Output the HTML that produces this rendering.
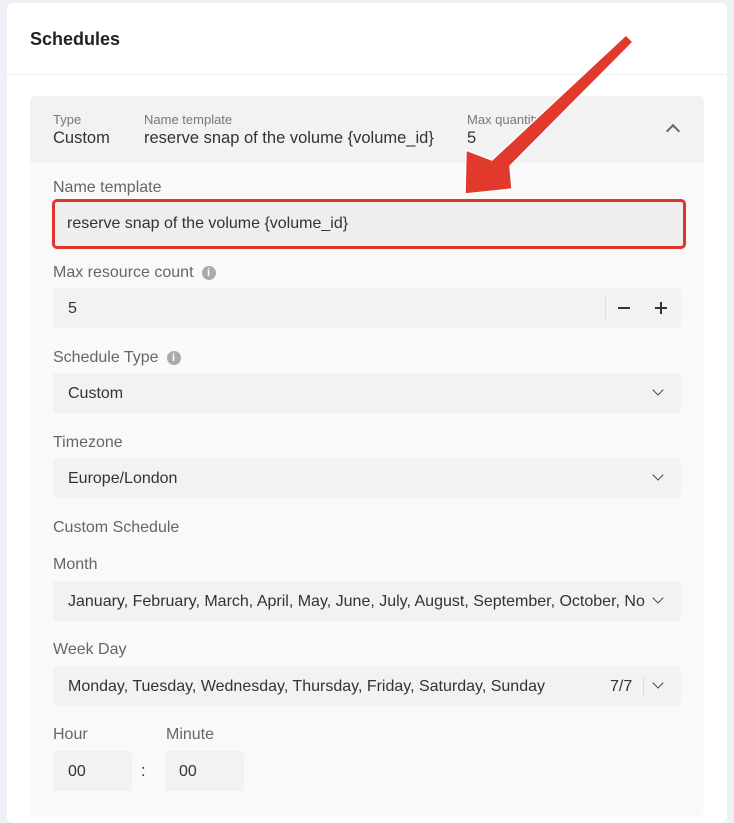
<!DOCTYPE html>
<html><head><style>
body{margin:0;width:734px;height:806px;background:#eef0f5;font-family:"Liberation Sans",sans-serif;position:relative;overflow:hidden;color:#333}
.card{position:absolute;left:7px;top:3px;width:720px;height:820px;background:#fff;border-radius:6px}
.title{position:absolute;left:30px;top:29px;font-size:18px;font-weight:bold;color:#222}
.hr{position:absolute;left:7px;top:74px;width:720px;height:1px;background:#eee}
.panel{position:absolute;left:30px;top:96px;width:674px;height:720px;background:#f9f9f9;border-radius:6px}
.phead{position:absolute;left:30px;top:96px;width:674px;height:67px;background:#f2f2f2;border-radius:6px 6px 0 0}
.t{position:absolute;white-space:nowrap}
.sm{font-size:13px;color:#777}
.md{font-size:16.5px;color:#333}
.lab{font-size:16px;color:#666}
.inp{position:absolute;left:53px;width:628px;height:40px;background:#f2f2f2;border-radius:3px}
.inp span{position:absolute;left:15px;top:12px;font-size:16px;color:#333;white-space:nowrap}
.chev{position:absolute;right:19px;top:13px;width:7px;height:7px;border-right:1.5px solid #444;border-bottom:1.5px solid #444;transform:rotate(45deg)}
.info{display:inline-block;width:14px;height:14px;border-radius:50%;background:#aaa;color:#fff;font-size:11px;font-weight:bold;text-align:center;line-height:14px;margin-left:8px;vertical-align:1px}
</style></head><body>
<div class="card"></div>
<div class="title">Schedules</div>
<div class="hr"></div>
<div class="panel"></div>
<div class="phead"></div>
<div class="t sm" style="left:53px;top:112px">Type</div>
<div class="t md" style="left:53px;top:129px">Custom</div>
<div class="t sm" style="left:144px;top:112px">Name template</div>
<div class="t md" style="left:144px;top:129px">reserve snap of the volume {volume_id}</div>
<div class="t sm" style="left:467px;top:112px">Max quantity</div>
<div class="t md" style="left:467px;top:129px">5</div>
<div style="position:absolute;left:668px;top:126px;width:8px;height:8px;border-left:2px solid #666;border-top:2px solid #666;transform:rotate(45deg)"></div>

<div class="t lab" style="left:53px;top:179px">Name template</div>
<div style="position:absolute;left:52px;top:199px;width:628px;height:44px;border:3px solid #e0352b;border-radius:5px;background:#eee"></div>
<div class="t md" style="left:67px;top:215px;font-size:16px">reserve snap of the volume {volume_id}</div>

<div class="t lab" style="left:53px;top:264px">Max resource count<span class="info">i</span></div>
<div class="inp" style="top:288px"><span>5</span>
<div style="position:absolute;left:552px;top:8px;width:1px;height:24px;background:#ddd"></div>
<div style="position:absolute;left:565px;top:19px;width:12px;height:2px;background:#333"></div>
<div style="position:absolute;left:602px;top:19px;width:12px;height:2px;background:#333"></div>
<div style="position:absolute;left:607px;top:14px;width:2px;height:12px;background:#333"></div>
</div>

<div class="t lab" style="left:53px;top:349px">Schedule Type<span class="info">i</span></div>
<div class="inp" style="top:373px"><span>Custom</span><div class="chev"></div></div>

<div class="t lab" style="left:53px;top:434px">Timezone</div>
<div class="inp" style="top:458px"><span>Europe/London</span><div class="chev"></div></div>

<div class="t lab" style="left:53px;top:519px">Custom Schedule</div>
<div class="t lab" style="left:53px;top:556px">Month</div>
<div class="inp" style="top:581px;overflow:hidden"><span style="width:577px;overflow:hidden">January, February, March, April, May, June, July, August, September, October, November, December</span><div class="chev"></div></div>

<div class="t lab" style="left:53px;top:641px">Week Day</div>
<div class="inp" style="top:666px"><span>Monday, Tuesday, Wednesday, Thursday, Friday, Saturday, Sunday</span>
<span style="left:557px">7/7</span>
<div style="position:absolute;left:590px;top:10px;width:1px;height:20px;background:#ddd"></div>
<div class="chev"></div></div>

<div class="t lab" style="left:53px;top:726px">Hour</div>
<div class="t lab" style="left:166px;top:726px">Minute</div>
<div class="inp" style="top:751px;width:79px"><span>00</span></div>
<div class="t md" style="left:141px;top:762px">:</div>
<div class="inp" style="top:751px;left:165px;width:79px"><span style="left:14px">00</span></div>

<svg style="position:absolute;left:0;top:0" width="734" height="806">
<polygon points="626,35 633,42 510,166 512,189 465,194 466,150 492,160" fill="#e13a2c" stroke="#fff" stroke-width="1.5" stroke-linejoin="round"/>
</svg>
</body></html>
